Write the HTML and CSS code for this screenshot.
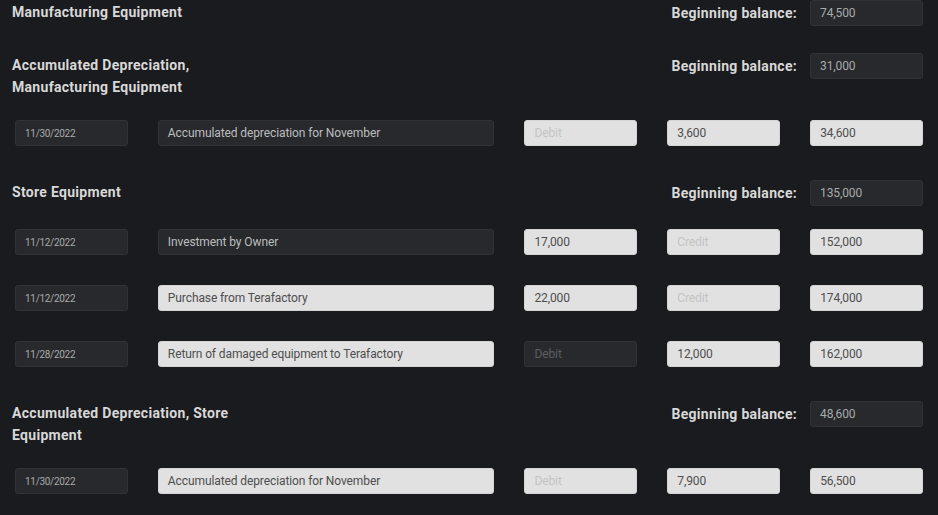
FILE: index.html
```html
<!DOCTYPE html>
<html lang="en">
<head>
<meta charset="utf-8">
<title>Ledger</title>
<link rel="stylesheet" href="styles.css">
</head>
<body>
<main class="ledger">
  <section class="account">
    <div class="account-head">
      <h2 class="account-title">Manufacturing Equipment</h2>
      <div class="balance">
        <span class="balance-label">Beginning balance:</span>
        <div class="field dark">74,500</div>
      </div>
    </div>
  </section>

  <section class="account">
    <div class="account-head">
      <h2 class="account-title">Accumulated Depreciation,<br>Manufacturing Equipment</h2>
      <div class="balance">
        <span class="balance-label">Beginning balance:</span>
        <div class="field dark">31,000</div>
      </div>
    </div>
    <div class="rows">
      <div class="row">
        <div class="field dark date">11/30/2022</div>
        <div class="field dark desc">Accumulated depreciation for November</div>
        <div class="field light ph">Debit</div>
        <div class="field light">3,600</div>
        <div class="field light">34,600</div>
      </div>
    </div>
  </section>

  <section class="account">
    <div class="account-head">
      <h2 class="account-title">Store Equipment</h2>
      <div class="balance">
        <span class="balance-label">Beginning balance:</span>
        <div class="field dark">135,000</div>
      </div>
    </div>
    <div class="rows">
      <div class="row">
        <div class="field dark date">11/12/2022</div>
        <div class="field dark desc">Investment by Owner</div>
        <div class="field light">17,000</div>
        <div class="field light ph">Credit</div>
        <div class="field light">152,000</div>
      </div>
      <div class="row">
        <div class="field dark date">11/12/2022</div>
        <div class="field light desc">Purchase from Terafactory</div>
        <div class="field light">22,000</div>
        <div class="field light ph">Credit</div>
        <div class="field light">174,000</div>
      </div>
      <div class="row">
        <div class="field dark date">11/28/2022</div>
        <div class="field light desc">Return of damaged equipment to Terafactory</div>
        <div class="field dark ph">Debit</div>
        <div class="field light">12,000</div>
        <div class="field light">162,000</div>
      </div>
    </div>
  </section>

  <section class="account">
    <div class="account-head">
      <h2 class="account-title">Accumulated Depreciation, Store<br>Equipment</h2>
      <div class="balance">
        <span class="balance-label">Beginning balance:</span>
        <div class="field dark">48,600</div>
      </div>
    </div>
    <div class="rows">
      <div class="row">
        <div class="field dark date">11/30/2022</div>
        <div class="field light desc">Accumulated depreciation for November</div>
        <div class="field light ph">Debit</div>
        <div class="field light">7,900</div>
        <div class="field light">56,500</div>
      </div>
    </div>
  </section>
</main>
</body>
</html>
```

FILE: styles.css
```css
html, body {
  margin: 0;
  padding: 0;
  background: #1a1b1e;
  height: 100%;
}

body {
  font-family: Roboto, "Liberation Sans", sans-serif;
  color: #d6d6d6;
}

.ledger {
  display: flex;
  flex-direction: column;
  gap: 27px;
  padding: 0 15px 0 12px;
}

.account-head {
  display: flex;
  justify-content: space-between;
  align-items: flex-start;
}

.account-title {
  margin: 0 0 -1px;
  padding-top: 1px;
  font-size: 14px;
  font-weight: 700;
  line-height: 22px;
  color: #d8d8d8;
  letter-spacing: 0.3px;
}

.balance {
  display: flex;
  align-items: center;
  gap: 13px;
}

.balance-label {
  font-size: 14px;
  font-weight: 700;
  color: #d8d8d8;
  letter-spacing: 0.3px;
}

.rows {
  display: flex;
  flex-direction: column;
  gap: 30px;
  margin-top: 23px;
  padding-bottom: 7px;
}

.row {
  display: flex;
  gap: 30px;
  padding-left: 3px;
}

.field {
  box-sizing: border-box;
  width: 113px;
  height: 26px;
  border-radius: 3px;
  padding: 0 9px;
  display: flex;
  align-items: center;
  font-size: 12px;
  letter-spacing: -0.1px;
  white-space: nowrap;
  overflow: hidden;
}

.field.dark {
  background: #27292d;
  border: 1px solid #303236;
  color: #a9a9a9;
}

.field.light {
  background: #e1e1e1;
  border: 1px solid #d4d4d4;
  color: #4e4e4e;
}

.field.desc {
  width: 337px;
}

.field.dark.desc {
  color: #bdbdbd;
}

.field.date {
  font-size: 10px;
  letter-spacing: -0.3px;
  color: #a9a9a9;
}

.field.light.ph {
  color: #c4c4c4;
}

.field.dark.ph {
  color: #5c5e61;
}
```
